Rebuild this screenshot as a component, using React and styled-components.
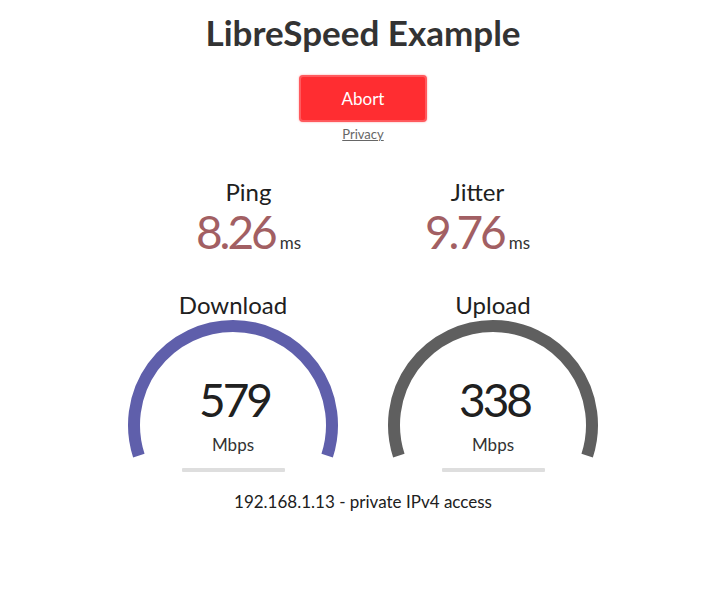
import React from "react";
import styled, { createGlobalStyle } from "styled-components";

const Global = createGlobalStyle`
  html, body { margin: 0; padding: 0; background: #fff; overflow: hidden; }
  body { font-family: Lato, "Open Sans", sans-serif; color: #202020; }
`;

const Page = styled.div`
  width: 726px;
  display: flex;
  flex-direction: column;
  align-items: center;
  text-align: center;
`;

const Title = styled.h1`
  margin: 0;
  padding-top: 12px;
  font-size: 35px;
  line-height: 40px;
  font-weight: 700;
  color: #333;
`;

const StopButton = styled.button`
  margin-top: 23px;
  width: 128px;
  height: 47px;
  box-sizing: border-box;
  background: #ff2d31;
  border: 2px solid #ff5a5e;
  border-radius: 4px;
  color: #fff;
  font-family: inherit;
  font-size: 17px;
  cursor: pointer;
  box-shadow: 0 0 2px rgba(255, 60, 60, 0.5);
`;

const PrivacyLink = styled.a`
  margin-top: 4px;
  font-size: 13px;
  line-height: 16px;
  color: #666;
  text-decoration: underline;
`;

const Row = styled.div`
  display: flex;
  justify-content: center;
  margin-top: ${(p) => p.$top}px;
`;

const Cell = styled.div`
  width: ${(p) => p.$w}px;
  display: flex;
  flex-direction: column;
  align-items: center;
`;

const TestName = styled.div`
  font-size: 24px;
  line-height: 28px;
  color: #202020;
`;

const ValueLine = styled.div`
  margin-top: 1px;
  font-size: 46px;
  line-height: 50px;
  white-space: nowrap;
`;

const BigNumber = styled.span`
  letter-spacing: -3px;
  color: ${(p) => p.$color};
`;

const InlineUnit = styled.span`
  font-size: 17px;
  line-height: 1;
  margin-left: 5px;
  color: #333;
`;

const GaugeStack = styled.div`
  display: grid;
  justify-items: center;
  & > * { grid-area: 1 / 1; }
`;

const GaugeText = styled.div`
  padding-top: 56px;
  display: flex;
  flex-direction: column;
  align-items: center;
`;

const GaugeNumber = styled.div`
  font-size: 46px;
  line-height: 50px;
  letter-spacing: -3px;
  padding-left: 3px;
  color: #202020;
`;

const GaugeUnit = styled.div`
  margin-top: 10px;
  font-size: 17px;
  line-height: 20px;
  color: #333;
`;

const ProgressTrack = styled.div`
  margin-top: 8px;
  width: 103px;
  height: 4px;
  border-radius: 1px;
  background: #dedede;
`;

const IpInfo = styled.div`
  margin-top: 20px;
  font-size: 17px;
  line-height: 20px;
  color: #202020;
`;

function Gauge({ color }) {
  const cx = 110, cy = 106, r = 99;
  const a = (18 * Math.PI) / 180;
  const dx = r * Math.cos(a), dy = r * Math.sin(a);
  return (
    <svg width="220" height="141" viewBox="0 0 220 141">
      <path
        d={`M ${cx - dx} ${cy + dy} A ${r} ${r} 0 1 1 ${cx + dx} ${cy + dy}`}
        fill="none"
        stroke={color}
        strokeWidth="12"
      />
    </svg>
  );
}

function Meter({ name, value, color }) {
  return (
    <Cell $w={260}>
      <TestName>{name}</TestName>
      <GaugeStack>
        <Gauge color={color} />
        <GaugeText>
          <GaugeNumber>{value}</GaugeNumber>
          <GaugeUnit>Mbps</GaugeUnit>
        </GaugeText>
      </GaugeStack>
      <ProgressTrack />
    </Cell>
  );
}

function SmallTest({ name, value }) {
  return (
    <Cell $w={229}>
      <TestName>{name}</TestName>
      <ValueLine>
        <BigNumber $color="#a25f63">{value}</BigNumber>
        <InlineUnit>ms</InlineUnit>
      </ValueLine>
    </Cell>
  );
}

export default function App() {
  return (
    <Page>
      <Global />
      <Title>LibreSpeed Example</Title>
      <StopButton>Abort</StopButton>
      <PrivacyLink href="#">Privacy</PrivacyLink>
      <Row $top={36}>
        <SmallTest name="Ping" value="8.26" />
        <SmallTest name="Jitter" value="9.76" />
      </Row>
      <Row $top={34}>
        <Meter name="Download" value="579" color="#5f5fab" />
        <Meter name="Upload" value="338" color="#5f5f5f" />
      </Row>
      <IpInfo>192.168.1.13 - private IPv4 access</IpInfo>
    </Page>
  );
}
